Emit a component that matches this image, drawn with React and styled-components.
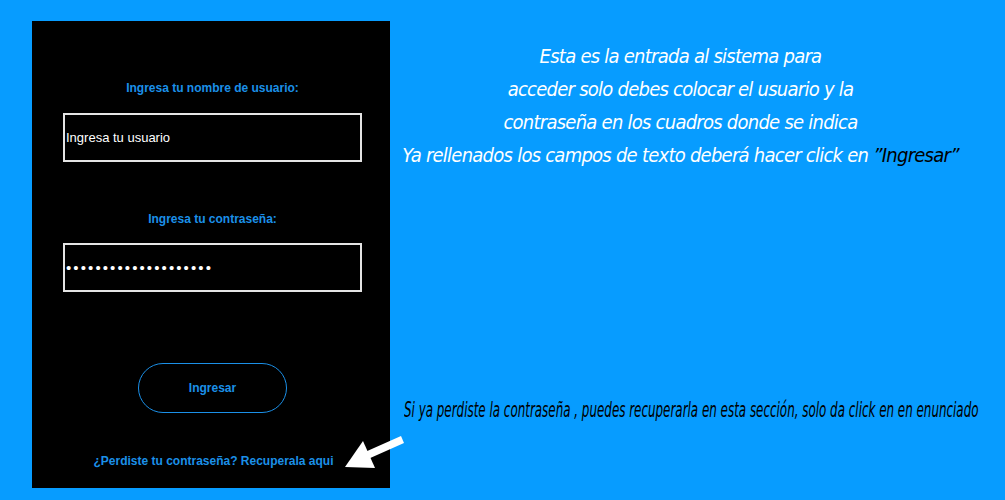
import styled, { createGlobalStyle } from "styled-components";

const Global = createGlobalStyle`
  html, body {
    margin: 0;
    padding: 0;
    background-color: #079cff;
  }
  * {
    box-sizing: border-box;
  }
`;

const Page = styled.div`
  position: relative;
  width: 1005px;
  height: 500px;
  display: flex;
  padding: 21px 0 0 32px;
  background-color: #079cff;
  overflow: hidden;
`;

const Panel = styled.div`
  flex: none;
  width: 358px;
  height: 467px;
  background-color: #000;
  display: flex;
  flex-direction: column;
  padding: 60px 28px 0 31px;
`;

const Label = styled.p`
  margin: 0 0 ${(p) => p.gap}px;
  height: 14px;
  line-height: 14px;
  text-align: center;
  font-family: "Liberation Sans", Arial, sans-serif;
  font-weight: bold;
  font-size: 12px;
  color: #1b90e8;
`;

const Field = styled.input`
  width: 299px;
  height: 49px;
  margin: 0 0 ${(p) => p.gap}px;
  padding: 0 1px;
  background-color: #000;
  border: 2px solid #e4e4e4;
  outline: none;
  color: #fff;
  font-family: "Liberation Sans", Arial, sans-serif;
  font-size: ${(p) => (p.type === "password" ? "15px" : "13px")};
  letter-spacing: ${(p) => (p.type === "password" ? "2.1px" : "0")};
`;

const Button = styled.button`
  align-self: center;
  width: 149px;
  height: 50px;
  margin: 0 0 41px;
  border: 1px solid #1b90e8;
  border-radius: 25px;
  background-color: #000;
  color: #1b90e8;
  font-family: "Liberation Sans", Arial, sans-serif;
  font-weight: bold;
  font-size: 12px;
  cursor: pointer;
`;

const Link = styled.a`
  align-self: center;
  margin-left: 2px;
  font-family: "Liberation Sans", Arial, sans-serif;
  font-weight: bold;
  font-size: 12px;
  color: #1b90e8;
  text-decoration: none;
  cursor: pointer;
`;

const Aside = styled.div`
  flex: 1;
  min-width: 0;
  display: flex;
  flex-direction: column;
  padding: 19px 34px 0 0;
`;

const Intro = styled.p`
  margin: 0;
  text-align: center;
  font-family: "DejaVu Sans Condensed", "DejaVu Sans", sans-serif;
  font-style: italic;
  font-size: 20px;
  letter-spacing: -0.75px;
  line-height: 33px;
  color: #fff;
`;

const Dark = styled.span`
  color: #000;
`;

const Hint = styled.p`
  margin: 225px 0 0 14px;
  white-space: nowrap;
  font-family: "DejaVu Sans Condensed", "DejaVu Sans", sans-serif;
  font-style: italic;
  font-size: 22px;
  color: #000;
  transform-origin: left center;
  transform: scaleX(0.602);
`;

const Arrow = styled.svg`
  position: absolute;
  left: 340px;
  top: 428px;
`;

export default function App() {
  return (
    <Page>
      <Global />
      <Panel>
        <Label gap={18}>Ingresa tu nombre de usuario:</Label>
        <Field gap={50} type="text" readOnly value="Ingresa tu usuario" />
        <Label gap={17}>Ingresa tu contraseña:</Label>
        <Field gap={71} type="password" readOnly value="12345678901234567890" />
        <Button>Ingresar</Button>
        <Link>¿Perdiste tu contraseña? Recuperala aqui</Link>
      </Panel>
      <Aside>
        <Intro>
          Esta es la entrada al sistema para
          <br />
          acceder solo debes colocar el usuario y la
          <br />
          contraseña en los cuadros donde se indica
          <br />
          Ya rellenados los campos de texto deberá hacer click en{" "}
          <Dark>”Ingresar”</Dark>
        </Intro>
        <Hint>
          Si ya perdiste la contraseña , puedes recuperarla en esta sección, solo da click en en enunciado
        </Hint>
      </Aside>
      <Arrow width="70" height="45" viewBox="0 0 70 45">
        <polygon points="61,8 64,15 28,31 25,24" fill="#fff" />
        <polygon points="5,39 23,13 35,40" fill="#fff" />
      </Arrow>
    </Page>
  );
}
